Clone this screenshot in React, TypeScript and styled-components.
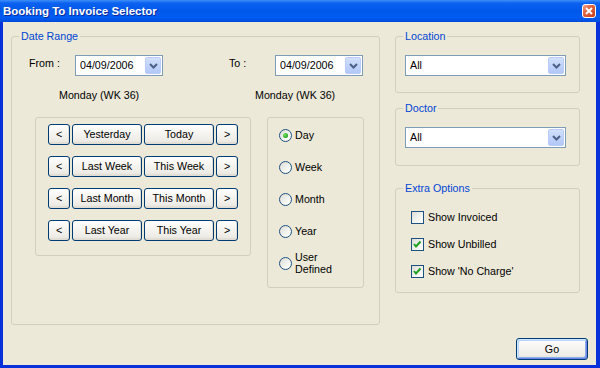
import React from 'react';
import styled, { createGlobalStyle } from 'styled-components';

const FONT = `"Liberation Sans", Arial, sans-serif`;

const GlobalStyle = createGlobalStyle`
  html, body { margin: 0; padding: 0; }
  body { background: #ECE9D8; font-family: ${FONT}; }
  * { box-sizing: border-box; }
`;

const Window = styled.div`
  width: 600px;
  height: 368px;
  display: flex;
  flex-direction: column;
  font-family: ${FONT};
  font-size: 10.7px;
  color: #000;
  overflow: hidden;
`;

const TitleBar = styled.div`
  flex: none;
  height: 22px;
  display: flex;
  align-items: center;
  justify-content: space-between;
  padding: 0 4px 0 3px;
  background: linear-gradient(180deg, #3D8FF9 0%, #0C62F0 14%, #0058EA 50%, #005CF1 80%, #004ADC 100%);
`;

const Title = styled.span`
  color: #fff;
  font-weight: bold;
  font-size: 11.5px;
  line-height: 14px;
  text-shadow: 1px 1px 0 #0B2C9C;
`;

const CloseButton = styled.button`
  width: 14px;
  height: 14px;
  padding: 0;
  border: 1px solid #fff;
  border-radius: 3px;
  background: linear-gradient(135deg, #F2A58E 0%, #E2623F 40%, #C63F1B 100%);
  display: flex;
  align-items: center;
  justify-content: center;
`;

const Frame = styled.div`
  flex: 1;
  display: flex;
  flex-direction: column;
  background: #ECE9D8;
  border: solid #0831D9;
  border-width: 0 4px 3px 3px;
`;

const Main = styled.div`
  display: flex;
  align-items: flex-start;
  gap: 15px;
  padding: 8px 0 0 8px;
`;

const Group = styled.fieldset<{ $w: number; $h: number }>`
  margin: 0;
  padding: 0;
  min-width: 0;
  width: ${(p) => p.$w}px;
  height: ${(p) => p.$h}px;
  border: 1px solid #D0D0BF;
  border-radius: 3px;
`;

const Legend = styled.legend`
  color: #0046D5;
  padding: 0 2px;
  margin-left: 7px;
  line-height: 13px;
  font-size: 10.7px;
`;

const DateBody = styled.div`
  display: flex;
  flex-direction: column;
  padding-top: 12px;
`;

const FieldRow = styled.div`
  display: flex;
  gap: 66px;
  padding-left: 17px;
`;

const Pair = styled.div`
  display: flex;
  align-items: flex-start;
`;

const FieldLabel = styled.span`
  width: 46px;
  padding-top: 2px;
  line-height: 13px;
`;

const Combo = styled.div<{ $w: number }>`
  width: ${(p) => p.$w}px;
  height: 21px;
  border: 1px solid #7F9DB9;
  background: #fff;
  display: flex;
  align-items: center;
  padding: 1px;
`;

const ComboText = styled.span`
  flex: 1;
  padding-left: 3px;
  line-height: 13px;
  white-space: nowrap;
`;

const ComboArrow = styled.span`
  width: 16px;
  height: 17px;
  border-radius: 2px;
  border: 1px solid #B9CDF8;
  background: linear-gradient(180deg, #D2E0FD 0%, #C1D3FB 50%, #B3C8F6 100%);
  display: flex;
  align-items: center;
  justify-content: center;
`;

const DayRow = styled.div`
  display: grid;
  grid-template-columns: 196px auto;
  padding-left: 47px;
  margin-top: 13px;
  line-height: 13px;
`;

const PanelRow = styled.div`
  display: flex;
  align-items: flex-start;
  gap: 16px;
  padding-left: 23px;
  margin-top: 15px;
`;

const Panel = styled.div<{ $w: number; $h: number }>`
  width: ${(p) => p.$w}px;
  height: ${(p) => p.$h}px;
  border: 1px solid #D0D0BF;
  border-radius: 3px;
`;

const ButtonGrid = styled(Panel)`
  display: grid;
  grid-template-columns: 22px 70px 70px 22px;
  grid-auto-rows: 21px;
  column-gap: 2px;
  row-gap: 11px;
  align-content: start;
  padding: 6px 0 0 12px;
`;

const XPButton = styled.button<{ $default?: boolean; $w?: number }>`
  width: ${(p) => (p.$w ? `${p.$w}px` : 'auto')};
  height: ${(p) => (p.$default ? 22 : 21)}px;
  padding: 0;
  font-family: ${FONT};
  font-size: 10.7px;
  color: #000;
  border: 1px solid #003C74;
  border-radius: 3px;
  background: linear-gradient(180deg, #FFFFFF 0%, #F5F4F0 45%, #ECEBE6 85%, #D8D2C6 100%);
  box-shadow: ${(p) =>
    p.$default
      ? 'inset 1px 1px 0 #CEE7FF, inset -1px -1px 0 #6982EE, inset 2px 2px 0 #BCD4F6, inset -2px -2px 0 #89ADE4'
      : 'inset -1px -1px 0 #E0DCD2'};
  display: flex;
  align-items: center;
  justify-content: center;
  line-height: 13px;
`;

const RadioPanel = styled(Panel)`
  display: flex;
  flex-direction: column;
  padding: 1px 0 0 11px;
`;

const RadioRow = styled.label`
  height: 32px;
  display: flex;
  align-items: center;
  gap: 3px;
  line-height: 12px;
`;

const RadioCircle = styled.span<{ $checked?: boolean }>`
  flex: none;
  width: 13px;
  height: 13px;
  border-radius: 50%;
  border: 1px solid #1C5180;
  background: linear-gradient(135deg, #DCDCD7 0%, #F4F4F0 60%, #FFFFFF 100%);
  display: flex;
  align-items: center;
  justify-content: center;
  &::after {
    content: '';
    display: ${(p) => (p.$checked ? 'block' : 'none')};
    width: 5px;
    height: 5px;
    border-radius: 50%;
    background: radial-gradient(circle at 35% 35%, #7EE46F 0%, #35B530 50%, #1E8F1C 100%);
  }
`;

const RightColumn = styled.div`
  width: 185px;
  display: flex;
  flex-direction: column;
`;

const SideGroup = styled(Group)<{ $mt: number }>`
  margin-top: ${(p) => p.$mt}px;
`;

const ComboBody = styled.div`
  padding: 12px 0 0 9px;
`;

const CheckBody = styled.div`
  display: flex;
  flex-direction: column;
  gap: 14px;
  padding: 16px 0 0 15px;
`;

const CheckRow = styled.label`
  height: 13px;
  display: flex;
  align-items: center;
  gap: 4px;
  line-height: 13px;
`;

const CheckBox = styled.span`
  flex: none;
  width: 13px;
  height: 13px;
  border: 1px solid #1C5180;
  background: linear-gradient(135deg, #DCDCD7 0%, #F4F4F0 60%, #FFFFFF 100%);
  display: flex;
  align-items: center;
  justify-content: center;
`;

const Footer = styled.div`
  margin-top: auto;
  display: flex;
  justify-content: flex-end;
  padding: 0 8px 5px 0;
`;

const Chevron = () => (
  <svg width="9" height="6" viewBox="0 0 9 6">
    <polyline points="1,1 4.5,4.5 8,1" fill="none" stroke="#4D6185" strokeWidth="2" />
  </svg>
);

const Check = () => (
  <svg width="11" height="11" viewBox="0 0 11 11">
    <polyline points="2,5 4,7.5 8.5,2.5" fill="none" stroke="#21A121" strokeWidth="2" />
  </svg>
);

const DropDown: React.FC<{ w: number; value: string }> = ({ w, value }) => (
  <Combo $w={w}>
    <ComboText>{value}</ComboText>
    <ComboArrow>
      <Chevron />
    </ComboArrow>
  </Combo>
);

const ranges = [
  ['Yesterday', 'Today'],
  ['Last Week', 'This Week'],
  ['Last Month', 'This Month'],
  ['Last Year', 'This Year'],
];

const periods = ['Day', 'Week', 'Month', 'Year'];

export default function App() {
  return (
    <Window>
      <GlobalStyle />
      <TitleBar>
        <Title>Booking To Invoice Selector</Title>
        <CloseButton aria-label="Close">
          <svg width="8" height="8" viewBox="0 0 8 8">
            <path d="M1 1 L7 7 M7 1 L1 7" stroke="#fff" strokeWidth="2" />
          </svg>
        </CloseButton>
      </TitleBar>
      <Frame>
        <Main>
          <Group $w={369} $h={295}>
            <Legend>Date Range</Legend>
            <DateBody>
              <FieldRow>
                <Pair>
                  <FieldLabel>From :</FieldLabel>
                  <DropDown w={88} value="04/09/2006" />
                </Pair>
                <Pair>
                  <FieldLabel>To :</FieldLabel>
                  <DropDown w={88} value="04/09/2006" />
                </Pair>
              </FieldRow>
              <DayRow>
                <span>Monday (WK 36)</span>
                <span>Monday (WK 36)</span>
              </DayRow>
              <PanelRow>
                <ButtonGrid $w={216} $h={139}>
                  {ranges.map(([a, b]) => (
                    <React.Fragment key={a}>
                      <XPButton>&lt;</XPButton>
                      <XPButton>{a}</XPButton>
                      <XPButton>{b}</XPButton>
                      <XPButton>&gt;</XPButton>
                    </React.Fragment>
                  ))}
                </ButtonGrid>
                <RadioPanel $w={97} $h={171}>
                  {periods.map((p, i) => (
                    <RadioRow key={p}>
                      <RadioCircle $checked={i === 0} />
                      <span>{p}</span>
                    </RadioRow>
                  ))}
                  <RadioRow>
                    <RadioCircle />
                    <span>
                      User
                      <br />
                      Defined
                    </span>
                  </RadioRow>
                </RadioPanel>
              </PanelRow>
            </DateBody>
          </Group>
          <RightColumn>
            <SideGroup $w={185} $h={63} $mt={0}>
              <Legend>Location</Legend>
              <ComboBody>
                <DropDown w={161} value="All" />
              </ComboBody>
            </SideGroup>
            <SideGroup $w={185} $h={64} $mt={9}>
              <Legend>Doctor</Legend>
              <ComboBody>
                <DropDown w={161} value="All" />
              </ComboBody>
            </SideGroup>
            <SideGroup $w={185} $h={111} $mt={16}>
              <Legend>Extra Options</Legend>
              <CheckBody>
                <CheckRow>
                  <CheckBox />
                  <span>Show Invoiced</span>
                </CheckRow>
                <CheckRow>
                  <CheckBox>
                    <Check />
                  </CheckBox>
                  <span>Show Unbilled</span>
                </CheckRow>
                <CheckRow>
                  <CheckBox>
                    <Check />
                  </CheckBox>
                  <span>Show 'No Charge'</span>
                </CheckRow>
              </CheckBody>
            </SideGroup>
          </RightColumn>
        </Main>
        <Footer>
          <XPButton $default $w={72}>
            Go
          </XPButton>
        </Footer>
      </Frame>
    </Window>
  );
}
